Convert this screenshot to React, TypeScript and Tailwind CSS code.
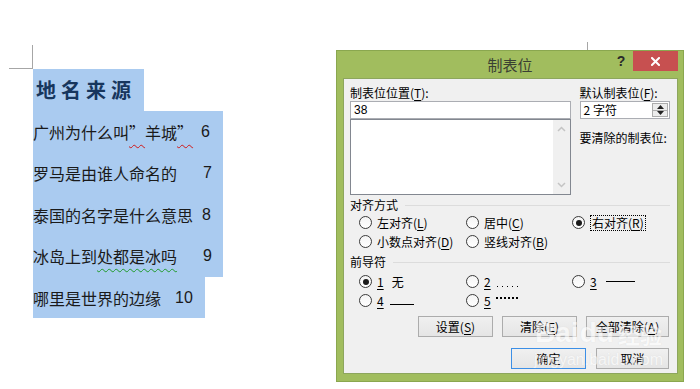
import React from 'react';

const CJK = "font-['Noto_Sans_CJK_SC',sans-serif]";

const U = ({ c }: { c: string }) => <span className="underline underline-offset-[2px]">{c}</span>;

type RadioProps = {
  checked?: boolean;
  children: React.ReactNode;
};

const Radio = ({ checked, children }: RadioProps): JSX.Element => (
  <div className="flex items-center h-[19px]">
    <span className="w-[13px] h-[13px] rounded-full border border-[#3a3a3a] bg-gradient-to-b from-[#f4f4f4] to-white flex items-center justify-center shrink-0">
      {checked && <span className="w-[6px] h-[6px] rounded-full bg-[#1a1a1a]" />}
    </span>
    <span className="ml-[5px] flex items-center whitespace-nowrap">{children}</span>
  </div>
);

const Button = ({ children, primary, width }: { children: React.ReactNode; primary?: boolean; width: string }) => (
  <div
    className={`${width} h-[21px] flex items-center justify-center border ${
      primary ? 'border-[#3c8fe6] bg-gradient-to-b from-[#f0f0f0] to-[#e5e5e5]' : 'border-[#acacac] bg-gradient-to-b from-[#f0f0f0] to-[#e5e5e5]'
    }`}
  >
    {children}
  </div>
);

const DocLine = ({ children, num, textW }: { children: React.ReactNode; num: string; textW: string }) => (
  <div className="h-[41.5px] flex items-center">
    <span className={`${textW} shrink-0 whitespace-nowrap`}>{children}</span>
    <span className="font-['Liberation_Sans',sans-serif] text-[16px]">{num}</span>
  </div>
);

const Document = (): JSX.Element => (
  <div className={`w-[336px] shrink-0 pl-[9px] pt-[45px] ${CJK} text-[#1a1a1a] text-[16px]`}>
    <div className="w-[24px] h-[24px] border-r border-b border-[#a6a6a6]" />
    <div className="ml-[24px]">
      <div className="w-[111px] h-[42px] bg-[#aacbf0] flex items-center pl-[3px] text-[20px] font-bold tracking-[5px] text-[#17365d]">
        地名来源
      </div>
      <div className="w-[190px] bg-[#aacbf0]">
        <DocLine num="6" textW="w-[168px]">
          广州为什么叫
          <span className="underline decoration-wavy decoration-[#d01818] decoration-1 underline-offset-[5px]">”</span>
          羊城
          <span className="underline decoration-wavy decoration-[#d01818] decoration-1 underline-offset-[5px]">”</span>
        </DocLine>
        <DocLine num="7" textW="w-[170px]">罗马是由谁人命名的</DocLine>
        <DocLine num="8" textW="w-[169px]">泰国的名字是什么意思</DocLine>
        <DocLine num="9" textW="w-[170px]">
          冰岛上到
          <span className="underline decoration-wavy decoration-[#1f9a2a] decoration-1 underline-offset-[5px]">处都是冰吗</span>
        </DocLine>
      </div>
      <div className="w-[172px] h-[41px] bg-[#aacbf0] flex items-center">
        <span className="w-[142px] shrink-0">哪里是世界的边缘</span>
        <span className="font-['Liberation_Sans',sans-serif]">10</span>
      </div>
    </div>
  </div>
);

const GroupLabel = ({ children }: { children: React.ReactNode }) => (
  <div className="h-[16px] flex items-center">
    <span className="leading-[16px]">{children}</span>
    <span className="flex-1 ml-[7px] h-px bg-[#dcdcdc]" />
  </div>
);

const Dialog = (): JSX.Element => (
  <div className={`mt-[50px] w-[348px] h-[332px] shrink-0 bg-[#a1bd5e] border border-[#8aa74f] flex flex-col ${CJK}`}>
    <div className="h-[27px] flex items-start">
      <div className="w-[71px]" />
      <div className="flex-1 text-center text-[15px] leading-[26px] pt-[1px] text-[#3a3f33]">制表位</div>
      <div className="w-[71px] flex items-start pr-[5px]">
        <span className="w-[21px] pr-[3px] text-center text-[14px] font-bold leading-[20px] text-[#2a2a2a] font-['Liberation_Sans',sans-serif]">?</span>
        <div className="w-[45px] h-[20px] bg-[#c75050] flex items-center justify-center">
          <svg width="9" height="9" viewBox="0 0 9 9">
            <path d="M1 1 L8 8 M8 1 L1 8" stroke="#ffffff" strokeWidth="2" strokeLinecap="square" />
          </svg>
        </div>
      </div>
    </div>

    <div className="ml-[6px] w-[335px] h-[296px] bg-[#f0f0f0] border border-[#8da65d] text-[12px] text-black flex flex-col pl-[6px] pr-[7px] relative">
      <div className="flex pt-[5px]">
        <div className="w-[222px] flex flex-col">
          <div className="h-[17px] leading-[17px]">
            制表位位置(<U c="T" />):
          </div>
          <div className="h-[18px] border border-[#abadb3] bg-white pl-[3px] leading-[16px] font-['Liberation_Sans',sans-serif]">38</div>
          <div className="h-[76px] border border-[#828790] bg-white flex justify-end">
            <div className="w-[17px] bg-[#f0f0f0] flex flex-col items-center justify-between py-[6px]">
              <svg width="9" height="6" viewBox="0 0 9 6">
                <path d="M1 5 L4.5 1.5 L8 5" stroke="#c4c4c4" strokeWidth="1.5" fill="none" />
              </svg>
              <svg width="9" height="6" viewBox="0 0 9 6">
                <path d="M1 1 L4.5 4.5 L8 1" stroke="#c4c4c4" strokeWidth="1.5" fill="none" />
              </svg>
            </div>
          </div>
        </div>
        <div className="ml-[9px] w-[91px] flex flex-col">
          <div className="h-[17px] leading-[17px]">
            默认制表位(<U c="F" />):
          </div>
          <div className="h-[18px] border border-[#abadb3] bg-white flex items-stretch">
            <span className="flex-1 pl-[3px] leading-[16px]">2 字符</span>
            <div className="w-[16px] my-[1px] mr-[1px] border border-[#acacac] bg-[#ececec] flex flex-col">
              <div className="flex-1 flex items-center justify-center border-b border-[#acacac]">
                <svg width="7" height="4" viewBox="0 0 7 4">
                  <path d="M0 4 L3.5 0 L7 4 Z" fill="#222" />
                </svg>
              </div>
              <div className="flex-1 flex items-center justify-center">
                <svg width="7" height="4" viewBox="0 0 7 4">
                  <path d="M0 0 L3.5 4 L7 0 Z" fill="#222" />
                </svg>
              </div>
            </div>
          </div>
          <div className="mt-[10px] h-[17px] leading-[17px] whitespace-nowrap">要清除的制表位:</div>
        </div>
      </div>

      <div className="mt-[2px]">
        <GroupLabel>对齐方式</GroupLabel>
      </div>
      <div className="ml-[9px] grid grid-cols-[107px_106px_1fr]">
        <Radio>
          左对齐(<U c="L" />)
        </Radio>
        <Radio>
          居中(<U c="C" />)
        </Radio>
        <Radio checked>
          <span className="border border-dotted border-black px-px leading-[14px]">
            右对齐(<U c="R" />)
          </span>
        </Radio>
        <Radio>
          小数点对齐(<U c="D" />)
        </Radio>
        <Radio>
          竖线对齐(<U c="B" />)
        </Radio>
      </div>

      <div className="mt-[3px]">
        <GroupLabel>前导符</GroupLabel>
      </div>
      <div className="mt-[2px] ml-[9px] grid grid-cols-[107px_106px_1fr]">
        <Radio checked>
          <U c="1" />
          <span className="ml-[8px]">无</span>
        </Radio>
        <Radio>
          <U c="2" />
          <span className="ml-[6px] flex items-end gap-[4px] h-[10px]">
            <span className="w-px h-px bg-black" />
            <span className="w-px h-px bg-black" />
            <span className="w-px h-px bg-black" />
            <span className="w-px h-px bg-black" />
            <span className="w-px h-px bg-black" />
          </span>
        </Radio>
        <Radio>
          <U c="3" />
          <span className="ml-[9px] w-[29px] h-px bg-black" />
        </Radio>
        <Radio>
          <U c="4" />
          <span className="ml-[6px] w-[24px] h-[9px] border-b border-black" />
        </Radio>
        <Radio>
          <U c="5" />
          <span className="ml-[5px] flex items-center gap-[2px] mb-[5px]">
            <span className="w-[2px] h-[2px] bg-black" />
            <span className="w-[2px] h-[2px] bg-black" />
            <span className="w-[2px] h-[2px] bg-black" />
            <span className="w-[2px] h-[2px] bg-black" />
            <span className="w-[2px] h-[2px] bg-black" />
            <span className="w-[2px] h-[2px] bg-black" />
          </span>
        </Radio>
      </div>

      <div className="mt-[6px] flex justify-end gap-[9px] pr-[1px]">
        <Button width="w-[75px]">
          设置(<U c="S" />)
        </Button>
        <Button width="w-[75px]">
          清除(<U c="E" />)
        </Button>
        <Button width="w-[83px]">
          全部清除(<U c="A" />)
        </Button>
      </div>
      <div className="mt-[11px] flex justify-end gap-[10px] pr-[1px]">
        <Button width="w-[75px]" primary>
          确定
        </Button>
        <Button width="w-[73px]">取消</Button>
      </div>

      <div className="absolute left-[190px] top-[240px] pointer-events-none select-none flex flex-col items-center text-white opacity-60 [text-shadow:0_0_1px_#d0d0d0]">
        <div className="flex items-end font-['Liberation_Sans',sans-serif] text-[28px] font-bold leading-[28px]">
          <span>Bai</span>
          <span className="ml-[1px]">du</span>
          <span className={`ml-[4px] ${CJK} text-[22px]`}>经验</span>
        </div>
        <div className="font-['Liberation_Sans',sans-serif] text-[16px] leading-[18px] mt-[4px]">jingyan.baidu.com</div>
      </div>
    </div>
  </div>
);

const App = (): JSX.Element => {
  return (
    <div className="w-[700px] h-[389px] bg-white flex overflow-hidden relative">
      <Document />
      <span className="absolute left-[587px] top-[42px] w-px h-[8px] bg-[#a6a6a6]" />
      <Dialog />
    </div>
  );
};

export default App;
